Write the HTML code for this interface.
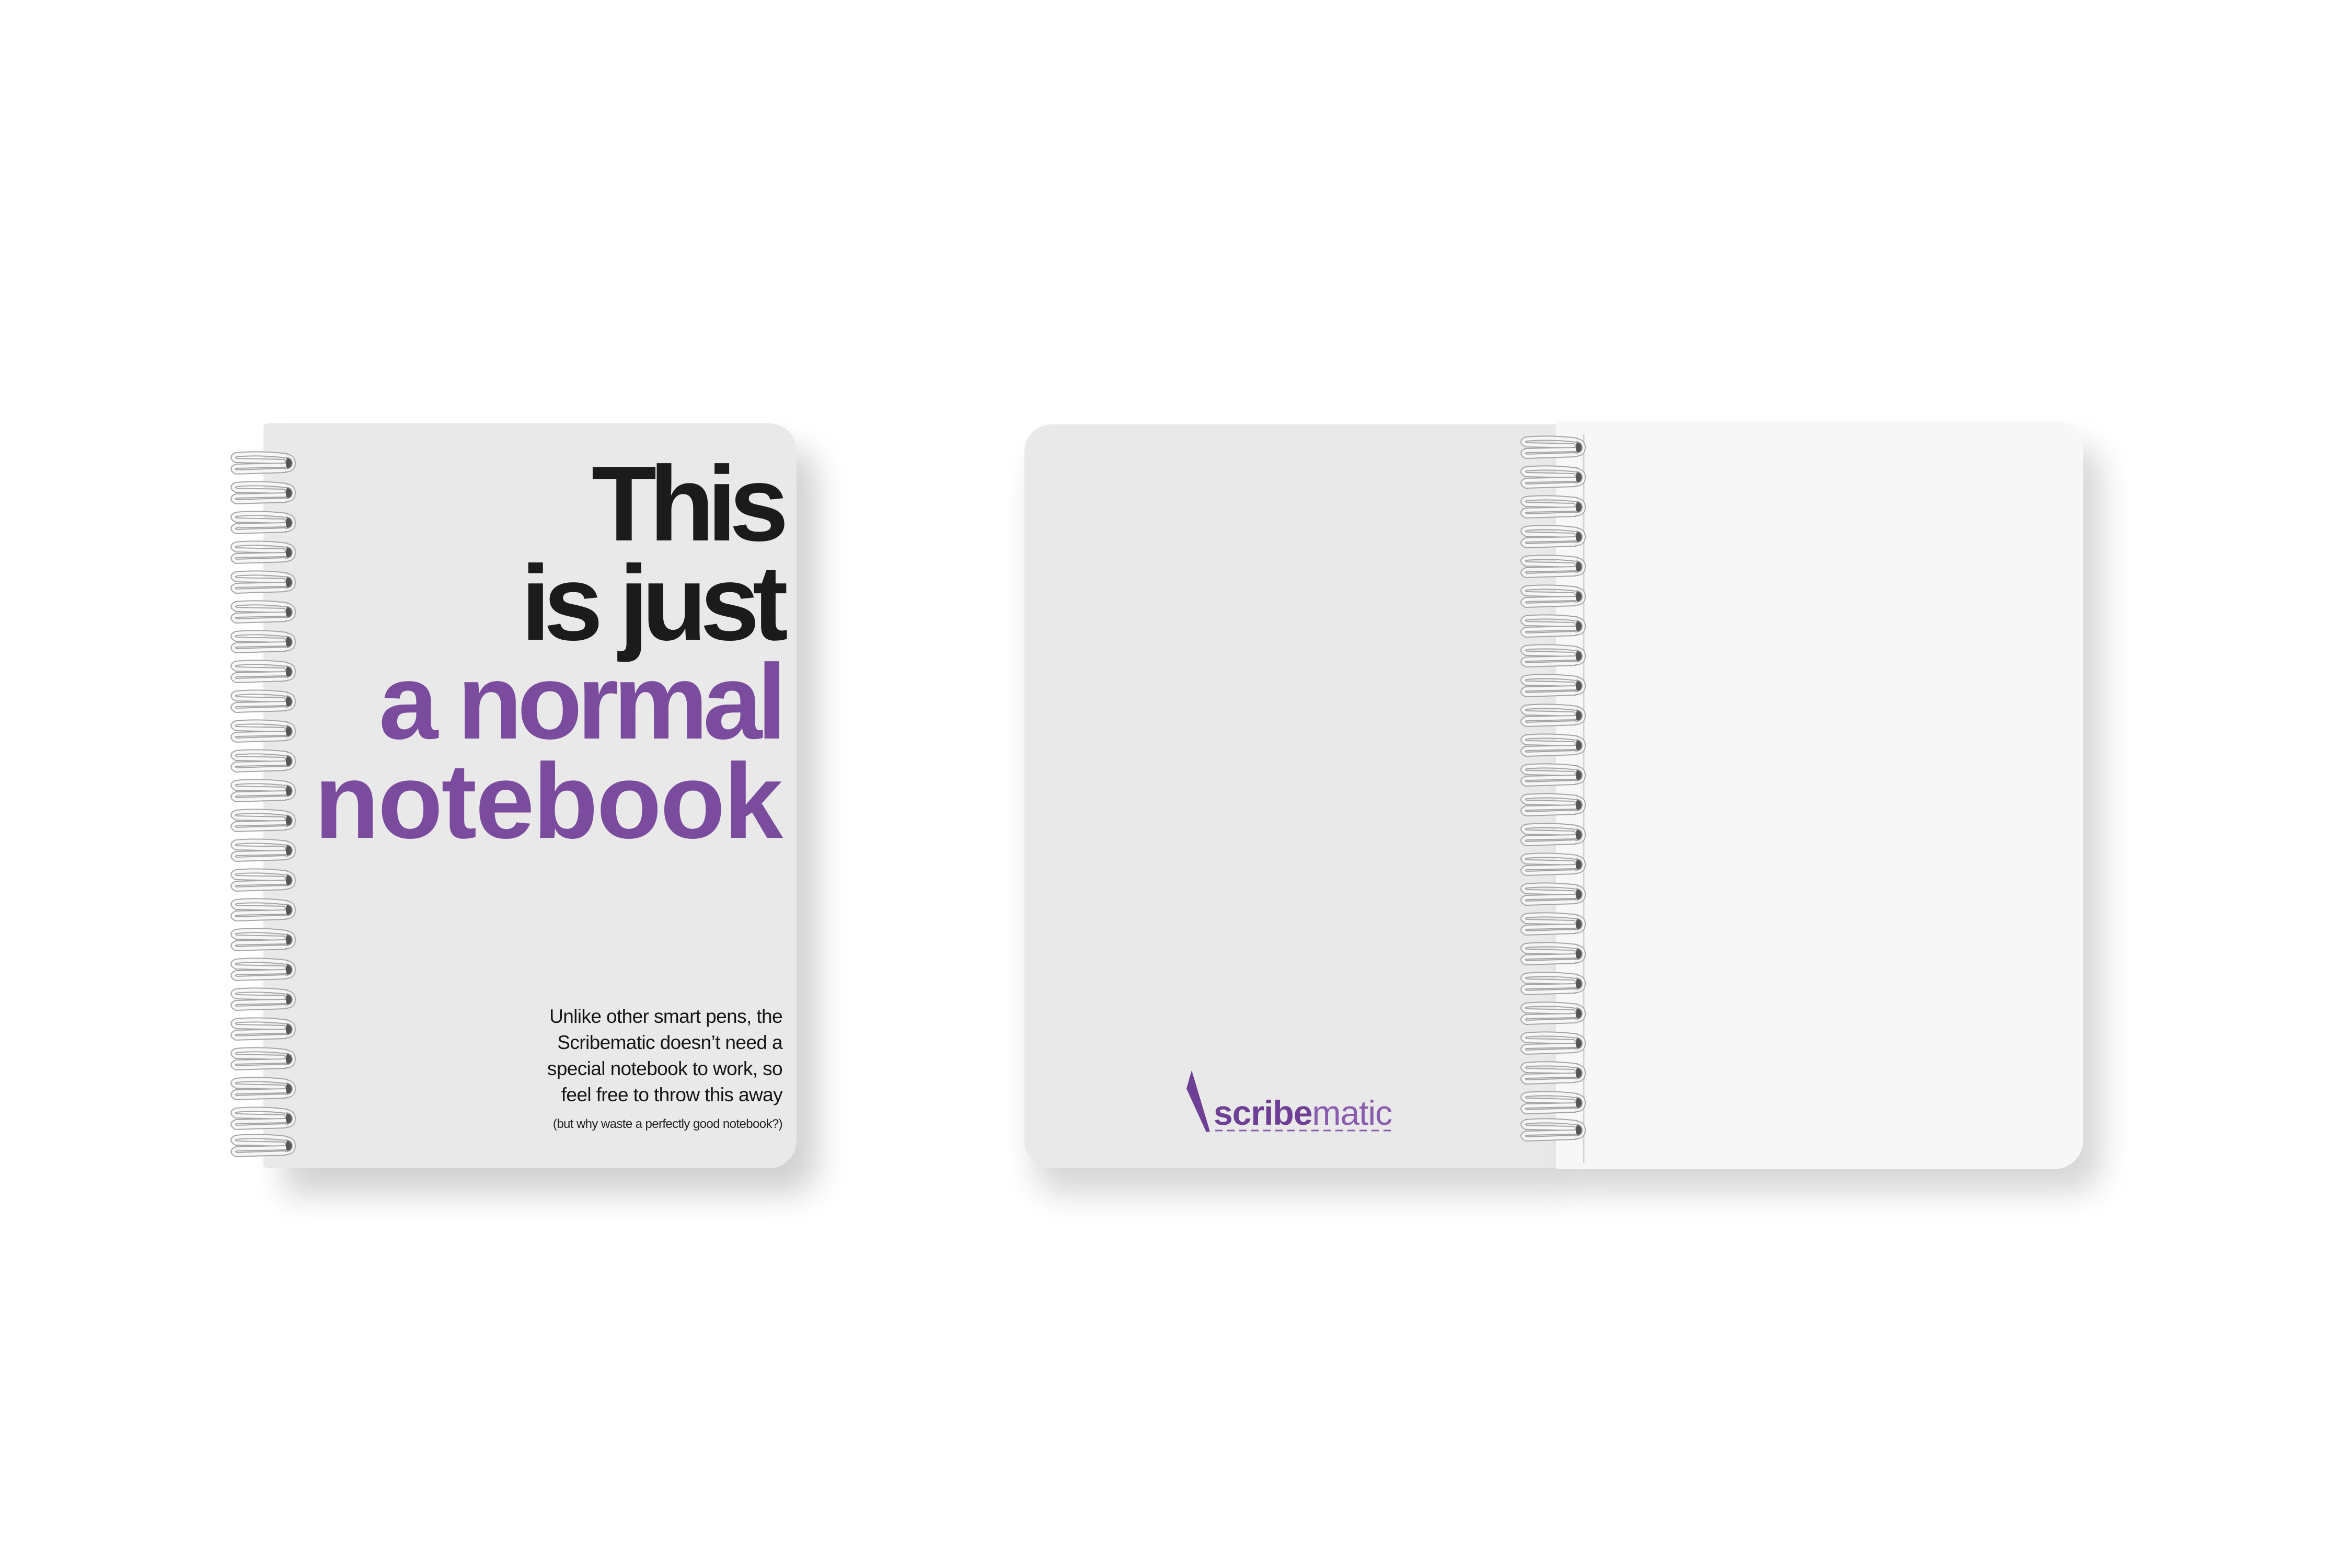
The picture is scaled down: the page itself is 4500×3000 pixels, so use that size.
<!DOCTYPE html>
<html><head><meta charset="utf-8"><style>
html,body{margin:0;padding:0;background:#fff;}
body{width:4500px;height:3000px;position:relative;overflow:hidden;font-family:"Liberation Sans",sans-serif;}
.cover{position:absolute;background:#e9e9e9;}
#c1{left:504px;top:810px;width:1020px;height:1425px;border-radius:8px 52px 52px 8px;box-shadow:40px 50px 60px rgba(0,0,0,0.18);}
#c2{left:1960px;top:812px;width:1032px;height:1423px;border-radius:52px 6px 6px 52px;box-shadow:20px 50px 60px rgba(0,0,0,0.16);}
#pg{left:2977px;top:805px;width:1009px;height:1432px;border-radius:4px 56px 56px 4px;background:#f7f7f7;box-shadow:35px 45px 60px rgba(0,0,0,0.16);}
.big{position:absolute;right:3005px;font-weight:bold;font-size:204px;line-height:1;white-space:nowrap;text-align:right;}
.blk{color:#1b1b1b}.pur{color:#7b4b9e}
.sm{position:absolute;right:3003px;text-align:right;color:#151515;font-size:37px;letter-spacing:-0.6px;line-height:50px;white-space:nowrap;}
.xs{position:absolute;right:3003px;color:#222;font-size:24px;letter-spacing:-0.6px;white-space:nowrap;}
</style></head><body>
<div class="cover" id="c2"></div>
<div class="cover" id="pg"></div>
<div class="cover" id="c1"></div>

<div class="big blk" style="top:862px;letter-spacing:-14px">This</div>
<div class="big blk" style="top:1052px;letter-spacing:-13px">is just</div>
<div class="big pur" style="top:1241px;letter-spacing:-10px">a normal</div>
<div class="big pur" style="top:1431px;letter-spacing:-3px">notebook</div>

<div class="sm" style="top:1920px">Unlike other smart pens, the<br>Scribematic doesn’t need a<br>special notebook to work, so<br>feel free to throw this away</div>
<div class="xs" style="top:2137px">(but why waste a perfectly good notebook?)</div>

<svg style="position:absolute;left:0;top:0" width="4500" height="3000">
<defs>
<g id="ring">
  <path d="M-4,-12 Q-55,-18 -100,-14 Q-112,-9 -100,-3 L-10,-1" fill="none" stroke="#a5a5a5" stroke-width="10" stroke-linecap="round"/>
  <path d="M-4,-12 Q-55,-18 -100,-14 Q-112,-9 -100,-3 L-10,-1" fill="none" stroke="#f6f6f6" stroke-width="6" stroke-linecap="round"/>
  <path d="M-6,6 L-100,8 Q-112,13 -100,19 L-6,16" fill="none" stroke="#a5a5a5" stroke-width="10" stroke-linecap="round"/>
  <path d="M-6,6 L-100,8 Q-112,13 -100,19 L-6,16" fill="none" stroke="#f6f6f6" stroke-width="6" stroke-linecap="round"/>
  <ellipse cx="2" cy="2" rx="7" ry="13" fill="#555"/>
  <path d="M-4,-12 Q10,-10 10,2 Q10,16 -6,16" fill="none" stroke="#a8a8a8" stroke-width="8"/>
  <path d="M-4,-12 Q10,-10 10,2 Q10,16 -6,16" fill="none" stroke="#f4f4f4" stroke-width="4"/>
</g>
</defs>
<g id="r1">
<use href="#ring" x="552" y="884"/><use href="#ring" x="552" y="941"/><use href="#ring" x="552" y="998"/><use href="#ring" x="552" y="1055"/><use href="#ring" x="552" y="1112"/><use href="#ring" x="552" y="1169"/><use href="#ring" x="552" y="1226"/><use href="#ring" x="552" y="1283"/><use href="#ring" x="552" y="1340"/><use href="#ring" x="552" y="1397"/><use href="#ring" x="552" y="1454"/><use href="#ring" x="552" y="1511"/><use href="#ring" x="552" y="1568"/><use href="#ring" x="552" y="1625"/><use href="#ring" x="552" y="1682"/><use href="#ring" x="552" y="1739"/><use href="#ring" x="552" y="1796"/><use href="#ring" x="552" y="1853"/><use href="#ring" x="552" y="1910"/><use href="#ring" x="552" y="1967"/><use href="#ring" x="552" y="2024"/><use href="#ring" x="552" y="2081"/><use href="#ring" x="552" y="2138"/><use href="#ring" x="552" y="2190"/>
</g>
<line x1="3030" y1="830" x2="3030" y2="2225" stroke="#d4d4d4" stroke-width="3"/>
<use href="#r1" x="2468" y="-30"/>
<path d="M2280,2048 L2315,2165 L2308,2166 L2270,2083 Z" fill="#6f3f95"/>
<text x="2322" y="2152" font-family="Liberation Sans, sans-serif" font-size="66" fill="#6f3f95" letter-spacing="-1"><tspan font-weight="bold">scribe</tspan><tspan font-weight="normal" fill="#8a5cae">matic</tspan></text>
<line x1="2325" y1="2163" x2="2662" y2="2163" stroke="#8a5cae" stroke-width="3" stroke-dasharray="14 9"/>
</svg>
</body></html>
